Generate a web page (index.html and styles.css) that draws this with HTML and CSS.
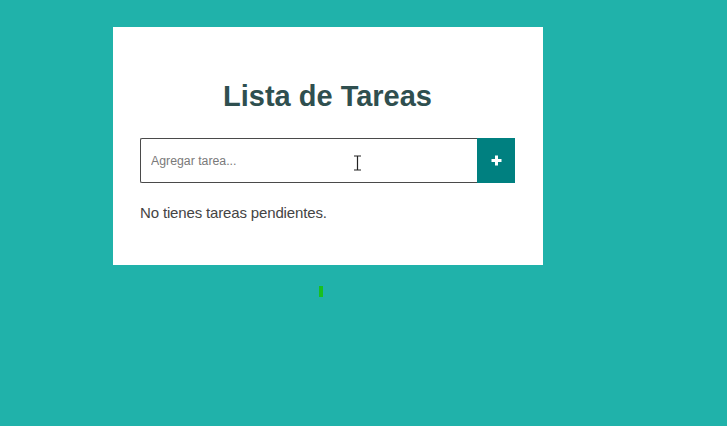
FILE: index.html
```html
<!DOCTYPE html>
<html lang="es">
<head>
<meta charset="utf-8">
<title>Lista de Tareas</title>
<link rel="stylesheet" href="styles.css">
</head>
<body>
<main class="page">
  <section class="card">
    <h1 class="title">Lista de Tareas</h1>
    <form class="add-form">
      <div class="field">
        <input class="task-input" type="text" placeholder="Agregar tarea...">
        <svg class="cursor" width="9" height="16" viewBox="0 0 9 16" aria-hidden="true">
          <path d="M1 1h7M4.5 1v14M1 15h7" stroke="#222" stroke-width="1.2" fill="none"/>
        </svg>
      </div>
      <button class="add-btn" type="button" aria-label="Agregar">
        <svg width="11" height="11" viewBox="0 0 11 11"><path d="M5.5 0.5v10M0.5 5.5h10" stroke="#fff" stroke-width="3"/></svg>
      </button>
    </form>
    <p class="empty">No tienes tareas pendientes.</p>
  </section>
  <div class="marker"></div>
</main>
</body>
</html>
```
FILE: styles.css
```css
html, body {
  margin: 0;
  padding: 0;
}
body {
  background: #20b2aa;
  font-family: "Liberation Sans", Arial, sans-serif;
  width: 727px;
  height: 426px;
  overflow: hidden;
}
.page {
  display: flex;
  flex-direction: column;
  padding: 27px 0 0 113px;
}
.card {
  box-sizing: border-box;
  width: 430px;
  height: 238px;
  background: #fff;
  padding: 27px 28px 27px 27px;
}
.title {
  margin: 24px 0 23px;
  text-align: center;
  font-size: 29px;
  line-height: 37px;
  font-weight: bold;
  color: #2f4f4f;
}
.add-form {
  display: flex;
  height: 45px;
}
.field {
  position: relative;
  flex: 1;
  display: flex;
}
.task-input {
  box-sizing: border-box;
  flex: 1;
  height: 45px;
  margin: 0;
  border: 1px solid #4a4a4a;
  border-right: none;
  border-radius: 2px 0 0 2px;
  padding: 0 10px;
  font-family: "Liberation Sans", Arial, sans-serif;
  font-size: 12.3px;
  color: #333;
  outline: none;
}
.task-input::placeholder {
  color: #7a7a7a;
}
.cursor {
  position: absolute;
  left: 213px;
  top: 17px;
}
.add-btn {
  width: 38px;
  height: 45px;
  margin: 0;
  padding: 0;
  border: none;
  background: #008080;
  display: flex;
  align-items: center;
  justify-content: center;
}
.empty {
  margin: 21px 0 0;
  font-size: 15px;
  letter-spacing: -0.15px;
  line-height: 18px;
  color: #444;
}
.marker {
  width: 4px;
  height: 11px;
  margin: 21px 0 0 206px;
  background: #19c01f;
}
```
